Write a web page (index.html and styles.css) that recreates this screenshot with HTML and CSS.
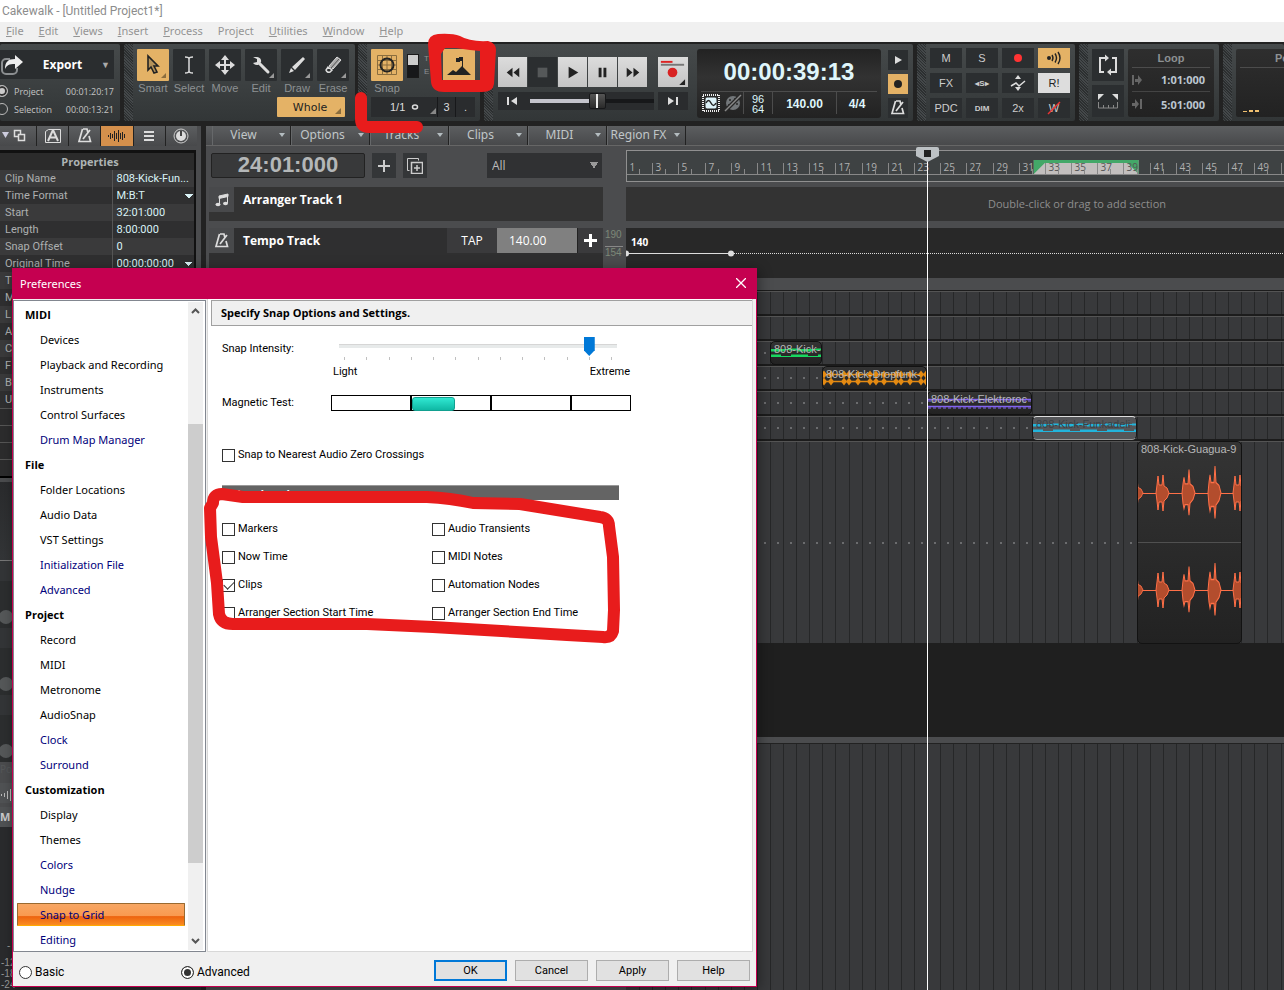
FILE: index.html
```html
<!DOCTYPE html>
<html lang="en">
<head>
<meta charset="utf-8">
<title>Cakewalk - [Untitled Project1*]</title>
<link rel="stylesheet" href="styles.css">
</head>
<body>
<div class="app">
  <header class="titlebar">Cakewalk - [Untitled Project1*]</header>
  <nav class="menubar">
    <a href="#"><u>F</u>ile</a><a href="#"><u>E</u>dit</a><a href="#"><u>V</u>iews</a><a href="#"><u>I</u>nsert</a><a href="#"><u>P</u>rocess</a><a href="#">Project</a><a href="#"><u>U</u>tilities</a><a href="#"><u>W</u>indow</a><a href="#"><u>H</u>elp</a>
  </nav>

  <section class="toolbar">
    <div class="module export">
      <button class="export-btn">
        <svg width="24" height="24" viewBox="0 0 24 24"><path d="M10 6H6a4 4 0 0 0-4 4v7a4 4 0 0 0 4 4h7a4 4 0 0 0 4-4v-2" fill="none" stroke="#8b8e90" stroke-width="2"/><path d="M5 16c0-7 3-10 10-10V2l8 7-8 7v-5c-6 0-8 1-10 5z" fill="#eee"/></svg>
        <span>Export</span><i>▼</i>
      </button>
      <label class="export-row"><input type="radio" name="range" checked><span>Project</span><b>00:01:20:17</b></label>
      <label class="export-row"><input type="radio" name="range"><span>Selection</span><b>00:00:13:21</b></label>
    </div>

    <div class="module gripped tools">
      <div class="tool-row">
        <div class="tool"><button class="sq on" aria-label="Smart"><svg viewBox="0 0 32 32"><path d="M11 7v14l3-3 3 6 3-1-3-6h4z" fill="#b5925a" stroke="#222" stroke-width="1.6"/><path d="M29 24v5h-5z" fill="#8a6d3e"/></svg></button><span>Smart</span></div>
        <div class="tool"><button class="sq" aria-label="Select"><svg viewBox="0 0 32 32"><path d="M12 8q4 0 4 2q0-2 4-2M16 9v14M12 24q4 0 4-2q0 2 4 2" fill="none" stroke="#ddd" stroke-width="1.5"/></svg></button><span>Select</span></div>
        <div class="tool"><button class="sq" aria-label="Move"><svg viewBox="0 0 32 32"><path d="M16 9v14M9 16h14" stroke="#ddd" stroke-width="2"/><path d="M16 6l4 5h-8zM16 26l4-5h-8zM6 16l5-4v8zM26 16l-5-4v8z" fill="#ddd"/></svg></button><span>Move</span></div>
        <div class="tool"><button class="sq" aria-label="Edit"><svg viewBox="0 0 32 32"><path d="M14 14l9 9" stroke="#ddd" stroke-width="3" stroke-linecap="round"/><path d="M8 8h4a4 4 0 0 1 4 5l-3 3a5 5 0 0 1-5-2l4-1v-3z" fill="#ddd"/><path d="M29 24v5h-5z" fill="#999"/></svg></button><span>Edit</span></div>
        <div class="tool"><button class="sq" aria-label="Draw"><svg viewBox="0 0 32 32"><path d="M22 8l2 2-10 11-3-3zM10 19l3 3-5 2z" fill="#ddd"/><path d="M29 24v5h-5z" fill="#999"/></svg></button><span>Draw</span></div>
        <div class="tool"><button class="sq" aria-label="Erase"><svg viewBox="0 0 32 32"><path d="M20 8l4 3-8 9-4-3z" fill="#aaa" stroke="#ddd"/><path d="M11 18l4 3-2 2q-3 1-4-2z" fill="none" stroke="#ddd" stroke-width="1.5"/><path d="M22 10l-8 9" stroke="#555"/><path d="M29 24v5h-5z" fill="#999"/></svg></button><span>Erase</span></div>
      </div>
      <button class="whole">Whole<svg width="6" height="6"><path d="M6 0v6H0z" fill="#8a6d3e"/></svg></button>
    </div>

    <div class="module gripped snap">
      <div class="snap-row">
        <div class="tool"><button class="sq on" aria-label="Snap"><svg viewBox="0 0 32 32"><path d="M6.500 6.500h19v19h-19zM11.500 6v20M16 6v20M20.500 6v20M6 11.500h20M6 16h20M6 20.500h20" fill="none" stroke="#8a6d3e"/><circle cx="16" cy="16" r="6.500" fill="none" stroke="#222" stroke-width="2"/></svg></button><span>Snap</span></div>
        <button class="toggle" aria-label="Snap mode"></button>
        <div class="te"><span>T</span><span>E</span></div>
        <button class="sq on landmark" aria-label="Landmarks"><svg viewBox="0 0 32 32"><path d="M4 26l6-5 3 2-2 3zM10 26l9-9 9 9z" fill="#222"/><path d="M13 9h4v4h-4zM16 8h4v4h-4z" fill="#222"/><path d="M19.500 8v11" stroke="#222"/></svg></button>
      </div>
      <div class="snap-values"><button class="v1">1/1 &nbsp;<svg width="8" height="8"><ellipse cx="4" cy="4" rx="2.500" ry="2" fill="none" stroke="#ddd" stroke-width="1.500"/></svg><svg class="corner" width="6" height="6"><path d="M6 0v6H0z" fill="#888"/></svg></button><button class="v2">3</button><button class="v3">.</button></div>
    </div>

    <div class="module gripped transport">
      <div class="deck">
        <div class="deck-row">
          <button class="key" aria-label="Rewind"><svg viewBox="0 0 30 30"><path d="M15 10v10l-6-5zM22 10v10l-6-5z"/></svg></button>
          <button class="key dark" aria-label="Stop"><svg viewBox="0 0 30 30"><path d="M10 10h10v10H10z" fill="#555859"/></svg></button>
          <button class="key" aria-label="Play"><svg viewBox="0 0 30 30"><path d="M11 9v12l10-6z"/></svg></button>
          <button class="key" aria-label="Pause"><svg viewBox="0 0 30 30"><path d="M11 10h3v10h-3zM16 10h3v10h-3z"/></svg></button>
          <button class="key" aria-label="Forward"><svg viewBox="0 0 30 30"><path d="M9 10v10l6-5zM16 10v10l6-5z"/></svg></button>
          <button class="key rec" aria-label="Record"><svg viewBox="0 0 30 30"><path d="M3 3h12v2H3z" fill="#d22"/><path d="M3 6h24v2H3z" fill="#777"/><circle cx="15" cy="15" r="5" fill="#d82222"/><path d="M28 22v6h-6z"/></svg></button>
        </div>
        <div class="deck-row seek">
          <button class="end" aria-label="Go to start"><svg width="12" height="10"><path d="M0 1h2v8H0zM10 1v8L4 5z" fill="#ddd"/></svg></button>
          <input class="scrub" type="range" min="0" max="100" value="56" aria-label="Position">
          <button class="end last" aria-label="Go to end"><svg width="12" height="10"><path d="M9 1h2v8H9zM1 1v8l6-4z" fill="#ddd"/></svg></button>
        </div>
      </div>
      <div class="clock">
        <div class="clock-time">00:00:39:13</div>
        <div class="clock-info">
          <svg width="42" height="18" viewBox="0 0 42 18"><rect x="2" y="1" width="16" height="16" fill="none" stroke="#eee" stroke-width="2" stroke-dasharray="1 1"/><rect x="4" y="3" width="12" height="12" rx="2" fill="#ddf2f8" stroke="#222"/><path d="M5 9q2.500-5 5 0t5 0" fill="none" stroke="#222" stroke-width="1.500"/><circle cx="32" cy="9" r="7" fill="#73777a"/><g fill="#292929"><circle cx="29" cy="6" r="1"/><circle cx="34" cy="5" r="1"/><circle cx="28" cy="11" r="1"/><circle cx="36" cy="10" r="1"/></g><path d="M24 17L40 1" stroke="#292929" stroke-width="4"/><path d="M24 17L40 1" stroke="#888" stroke-width="1.500"/></svg>
          <span class="rate">96<br>64</span><b class="tempo">140.00</b><b class="meter">4/4</b>
        </div>
      </div>
      <div class="side">
        <button aria-label="Play mode"><svg viewBox="0 0 20 20"><path d="M7 6v8l7-4z" fill="#ddd"/></svg></button>
        <button class="on" aria-label="Record mode"><svg viewBox="0 0 20 20"><circle cx="10" cy="10" r="4" fill="#222"/></svg></button>
        <button aria-label="Metronome"><svg viewBox="0 0 20 20"><use href="#metro"/></svg></button>
      </div>
    </div>

    <div class="module gripped mix">
      <button>M</button><button>S</button><button aria-label="Arm"><svg viewBox="0 0 32 20"><circle cx="16" cy="10" r="4" fill="#f33"/></svg></button><button class="on" aria-label="Input echo"><svg viewBox="0 0 32 20"><circle cx="11" cy="10" r="2" fill="#222"/><path d="M14 7q2 3 0 6M17 5.500q3 4.500 0 9M20 4q4 6 0 12" fill="none" stroke="#222" stroke-width="1.400"/></svg></button>
      <button>FX</button><button class="tiny">◂S▸</button><button aria-label="Offset"><svg viewBox="0 0 32 20"><path d="M9 13l5-3 3 3 6-5" fill="none" stroke="#ddd" stroke-width="1.500"/><path d="M16 2l3 4h-6zM16 18l3-4h-6z" fill="#ddd"/></svg></button><button class="lit">R!</button>
      <button>PDC</button><button class="tiny">DIM</button><button>2x</button><button class="write"><span>W</span><svg viewBox="0 0 32 20"><path d="M10 16L22 4" stroke="#e33" stroke-width="1.500"/></svg></button>
    </div>

    <div class="module gripped loop">
      <div class="loop-btns">
        <button aria-label="Loop"><svg viewBox="0 0 32 32"><path d="M12 9H8v14h4M20 23h4V9h-4M12 9h3M17 23h3" fill="none" stroke="#ddd" stroke-width="2"/><path d="M13 5.500v7l4-3.500zM19 19.500v7l-4-3.500z" fill="#ddd"/></svg></button>
        <button aria-label="Set loop"><svg viewBox="0 0 32 32"><path d="M6 9h6l-6 6zM26 9h-6l6 6z" fill="#ddd"/><path d="M6.500 17v6h19v-6M11.500 20v3M16.500 20v3M21.500 20v3" fill="none" stroke="#888"/></svg></button>
      </div>
      <div class="panel">
        <h3>Loop</h3>
        <p><svg width="11" height="12"><path d="M0 1h2v10H0zM3 5h3V1l4 5-4 5V8H3z" fill="#666"/></svg><b>1:01:000</b></p>
        <p><svg width="11" height="12"><path d="M8 1h2v10H8zM0 5h3V1l4 5-4 5V8H0z" fill="#666"/></svg><b>5:01:000</b></p>
      </div>
    </div>

    <div class="module gripped perf"><div class="panel"><h3>Pe</h3><svg width="18" height="3"><path d="M0 1h4v1H0zM6 0h4v2H6zM12 0h4v2h-4z" fill="#f0c070"/></svg></div></div>
  </section>

  <div class="work">
    <aside class="inspector">
      <div class="tabs">
        <button aria-label="Dock"><svg width="24" height="16"><path d="M0 4h7l-3.500 6z" fill="#ccd"/><path d="M12.500 2.500h6v6h-6z" fill="none" stroke="#ddd" stroke-width="1.500"/><path d="M16.500 6.500h6v6h-6z" fill="#555" stroke="#ddd" stroke-width="1.500"/></svg></button>
        <button aria-label="Arranger"><svg width="16" height="16"><path d="M3.500 1.500h12v13H.500v-11z" fill="none" stroke="#ddd"/><path d="M3 13l4.500-10h1L13 13M5 9.500h6" fill="none" stroke="#ddd" stroke-width="2"/></svg></button>
        <button aria-label="Tempo"><svg width="20" height="20"><use href="#metro"/></svg></button>
        <button class="on" aria-label="Clip"><svg width="18" height="14"><path d="M.500 6v2M2.500 4v6M4.500 5v4M6.500 2v10M8.500 4v6M10.500 1v12M12.500 4v6M14.500 3v8M16.500 5v4" stroke="#222"/></svg></button>
        <button aria-label="List"><svg width="12" height="12"><path d="M1 1h10v2H1zM1 5h10v2H1zM1 9h10v2H1z" fill="#ddd"/></svg></button>
        <button aria-label="Channel"><svg width="16" height="16"><circle cx="8" cy="8" r="7" fill="none" stroke="#ccc"/><circle cx="8" cy="8" r="5" fill="#ddd"/><path d="M8 3v5" stroke="#444" stroke-width="2"/></svg></button>
      </div>
      <table class="props">
        <caption>Properties</caption>
        <tbody>
          <tr><th>Clip Name</th><td>808-Kick-Fun...</td></tr>
          <tr><th><label for="tf">Time Format</label></th><td><select id="tf"><option>M:B:T</option></select></td></tr>
          <tr><th>Start</th><td>32:01:000</td></tr>
          <tr><th>Length</th><td>8:00:000</td></tr>
          <tr><th>Snap Offset</th><td>0</td></tr>
          <tr><th><label for="ot">Original Time</label></th><td><select id="ot"><option>00:00:00:00</option></select></td></tr>
          <tr><th>T</th><td></td></tr><tr><th>M</th><td></td></tr><tr><th>L</th><td></td></tr><tr><th>A</th><td></td></tr>
          <tr><th>C</th><td></td></tr><tr><th>F</th><td></td></tr><tr><th>B</th><td></td></tr><tr><th>U</th><td></td></tr>
        </tbody>
      </table>
      <div class="blanks"><i></i><i></i><i></i><i></i></div>
      <div class="rack"></div>
      <div class="knob"><i></i>Pos</div><div class="knob"><i></i>Pos</div><div class="knob"><i></i>Pos</div>
      <div class="strip-btn first"><svg width="12" height="12"><path d="M1.500 5v2M4.500 4v4M7.500 2v8M10.500 0v12" stroke="#bbb"/></svg></div>
      <div class="strip-btn bold">M</div>
      <div class="meter-scale"><span>-</span><span>-12</span><span>-18</span><span>-24</span></div>
    </aside>

    <main class="tracks">
      <nav class="track-menu">
        <button>View<i></i></button><button>Options<i></i></button><button>Tracks<i></i></button><button>Clips<i></i></button><button>MIDI<i></i></button><button>Region FX<i></i></button>
      </nav>
      <div class="track-body">
        <div class="heads">
          <div class="head-bar">
            <div class="now">24:01:000</div>
            <button aria-label="Add"><svg width="14" height="14"><path d="M7 1v12M1 7h12" stroke="#ccc" stroke-width="2"/></svg></button>
            <button aria-label="Duplicate"><svg width="16" height="16"><path d="M4.500 4.500h11v11h-11zM10 7v6M7 10h6" fill="none" stroke="#ccc" stroke-width="1.500"/><path d="M2.500 12.500h-2v-12h11v2" fill="none" stroke="#ccc"/></svg></button>
            <select aria-label="Track filter"><option>All</option></select>
          </div>
          <div class="head arr"><div class="ico"><svg width="14" height="14"><path d="M4 3l9-2v2.500L4 5.500zM4.500 4v7M12.500 2v8" stroke="#ddd" fill="#ddd"/><ellipse cx="3" cy="11.500" rx="2.500" ry="1.700" fill="#ddd"/><ellipse cx="10.500" cy="10.500" rx="2.500" ry="1.700" fill="#ddd"/></svg></div><strong>Arranger Track 1</strong></div>
          <div class="head tmp"><div class="ico"><svg width="20" height="20"><use href="#metro"/></svg></div><strong>Tempo Track</strong><button class="tap">TAP</button><input value="140.00" aria-label="Tempo"><button class="plus" aria-label="Add tempo"><svg width="13" height="13"><path d="M6.500 0v13M0 6.500h13" stroke="#fff" stroke-width="3"/></svg></button></div>
        </div>
        <div class="scale"><span>190</span><span class="sep">154</span><span>98</span></div>
        <div class="timeline">
          <svg class="ruler" id="ruler"></svg>
          <div class="arr-lane">Double-click or drag to add section</div>
          <div class="tempo-lane"><b>140</b><svg width="100%" height="7"><path d="M0 3.500h105" stroke="#ddd"/><path d="M106 3.500h900" stroke="#ddd" stroke-dasharray="1 1"/><circle cx="0" cy="3.500" r="3" fill="#ddd"/><circle cx="105" cy="3.500" r="3" fill="#ddd"/></svg></div>
          <div class="lanes" id="lanes"></div>
          <div class="void"></div>
          <div class="split"></div>
          <div class="lower" id="lower"></div>
          <div class="playhead"><svg width="23" height="15"><path d="M2 0h19q2 0 2 2v7l-11.500 6L0 9V2q0-2 2-2z" fill="#bcc1c4"/><path d="M8 3h7v7H8z" fill="#222"/></svg></div>
        </div>
      </div>
    </main>
  </div>

  <section class="dialog" role="dialog" aria-label="Preferences">
    <header><span>Preferences</span><button aria-label="Close"><svg width="10" height="10"><path d="M0 0l10 10M10 0L0 10" stroke="#fff" stroke-width="1.300"/></svg></button></header>
    <div class="dlg-body">
      <div class="tree">
        <nav>
          <h4>MIDI</h4><a href="#">Devices</a><a href="#">Playback and Recording</a><a href="#">Instruments</a><a href="#">Control Surfaces</a><a href="#" class="adv">Drum Map Manager</a>
          <h4>File</h4><a href="#">Folder Locations</a><a href="#">Audio Data</a><a href="#">VST Settings</a><a href="#" class="adv">Initialization File</a><a href="#" class="adv">Advanced</a>
          <h4>Project</h4><a href="#">Record</a><a href="#">MIDI</a><a href="#">Metronome</a><a href="#">AudioSnap</a><a href="#" class="adv">Clock</a><a href="#" class="adv">Surround</a>
          <h4>Customization</h4><a href="#">Display</a><a href="#">Themes</a><a href="#" class="adv">Colors</a><a href="#" class="adv">Nudge</a><a href="#" class="adv sel">Snap to Grid</a><a href="#" class="adv">Editing</a>
        </nav>
        <div class="scroll"><svg width="9" height="6"><path d="M1 5l3.500-3.500L8 5" fill="none" stroke="#555" stroke-width="2"/></svg><i></i><svg width="9" height="6"><path d="M1 1l3.500 3.500L8 1" fill="none" stroke="#555" stroke-width="2"/></svg></div>
      </div>
      <div class="page">
        <h2>Specify Snap Options and Settings.</h2>
        <div class="form">
          <div class="field"><label for="intensity">Snap Intensity:</label>
            <div class="slider"><input type="range" id="intensity" min="0" max="12" value="11"><div class="ticks"><i></i><i></i><i></i><i></i><i></i><i></i><i></i><i></i><i></i><i></i><i></i><i></i><i></i></div><div class="ends"><span>Light</span><span>Extreme</span></div></div></div>
          <div class="field mag"><span>Magnetic Test:</span><div class="segs"><i></i><i class="ball"></i><i></i><i></i></div></div>
          <label class="chk zero"><input type="checkbox">Snap to Nearest Audio Zero Crossings</label>
          <h3>Landmarks</h3>
          <div class="marks">
            <label class="chk"><input type="checkbox">Markers</label><label class="chk"><input type="checkbox">Audio Transients</label>
            <label class="chk"><input type="checkbox">Now Time</label><label class="chk"><input type="checkbox">MIDI Notes</label>
            <label class="chk"><input type="checkbox" checked>Clips</label><label class="chk"><input type="checkbox">Automation Nodes</label>
            <label class="chk"><input type="checkbox">Arranger Section Start Time</label><label class="chk"><input type="checkbox">Arranger Section End Time</label>
          </div>
        </div>
      </div>
    </div>
    <footer>
      <label><input type="radio" name="mode">Basic</label><label class="second"><input type="radio" name="mode" checked>Advanced</label>
      <div class="btns"><button class="default">OK</button><button>Cancel</button><button>Apply</button><button>Help</button></div>
    </footer>
  </section>

  <svg class="marker" width="640" height="660" viewBox="0 0 640 660">
    <path fill-rule="evenodd" fill="#e81c1c" d="M428 44Q428 35 438 34Q452 33 460 36Q470 42 488 41Q496 43 496 50L494 84Q493 92 482 92H444Q432 92 431 82ZM445 48L441 54L442 80H480V51L470 50L456 48Z"/>
    <g fill="none" stroke="#e81c1c" stroke-width="12" stroke-linecap="round" stroke-linejoin="round">
      <path d="M361 98V119Q361 127 369 127H417"/>
      <path d="M210 508L213 503Q213 494 222 494L243 497H427Q450 498 473 503L520 504L600 517Q609 518 609 526L613 557L614 610L613 631Q611 638 603 637L567 635L433 627L367 624H233Q221 624 219 614L217 583L211 537L210 508"/>
    </g>
  </svg>
</div>
<svg width="0" height="0" class="defs"><defs><g id="metro"><path d="M8 3h4l1 4M7.500 3L4 15.500h11.500L14 10M8 13l7-9" fill="none" stroke="#ddd" stroke-width="1.700"/></g></defs></svg>
<script src="app.js"></script>
</body>
</html>
```

FILE: styles.css
```css
* { box-sizing: border-box; }
body { margin: 0; font-family: "Open Sans", "Noto Sans", sans-serif; font-size: 11px; color: #ccc; background: #222; }
button, input, select { font: inherit; color: inherit; margin: 0; }
button { border: 0; padding: 0; background: none; }
button svg { display: block; }
a { text-decoration: none; }
h2, h3, h4, p { margin: 0; }
.defs { position: absolute; }
.app { position: relative; height: 100vh; overflow: hidden; display: flex; flex-direction: column; }
.titlebar { height: 22px; line-height: 22px; padding-left: 2px; background: #fff; color: #8c8c8c; font-size: 12px; font-family: Roboto, sans-serif; flex: none; }
.menubar { height: 20px; background: #f0f0f0; display: flex; gap: 15px; padding-left: 6px; line-height: 18px; font-size: 11px; font-family: "Noto Sans", sans-serif; flex: none; }
.menubar a { color: #949494; }

.toolbar { height: 84px; padding: 2px 0 5px; background: #222; display: flex; gap: 4px; flex: none; overflow: hidden; font-family: "Liberation Sans", sans-serif; }
.module { background: linear-gradient(#464a4b, #323637); border-radius: 2px; padding: 5px 5px 4px; flex: none; }
.gripped { padding-left: 13px; background: repeating-linear-gradient(45deg, #2c2f30 0 1px, #44484a 1px 2px) 0 0 / 9px 100% no-repeat, linear-gradient(#464a4b, #323637); }
.export { width: 120px; padding: 6px 6px 0 0; font-family: "Open Sans", sans-serif; }
.export-btn { width: 100%; height: 29px; background: #2a2d2f; display: flex; align-items: center; justify-content: space-between; color: #fff; font-weight: bold; font-size: 12px; padding-right: 4px; margin-bottom: 3px; }
.export-btn i { font-style: normal; font-size: 9px; color: #aaa; }
.export-row { display: flex; align-items: center; height: 18px; font-size: 9px; gap: 6px; color: #c4c4c4; }
.export-row span { flex: 1; }
.export-row b { font-weight: normal; }
.export-row input { appearance: none; width: 12px; height: 12px; border: 1px solid #bbb; border-radius: 50%; margin-left: -4px; }
.export-row input:checked { background: #ccc; box-shadow: inset 0 0 0 2px #333; }
.tool-row { display: flex; gap: 4px; }
.tool { width: 32px; display: flex; flex-direction: column; align-items: center; font-size: 11px; line-height: 15px; color: #8d9193; }
.sq { width: 32px; height: 32px; background: #2b2e30; border-radius: 1px; }
.on, .sq.on { background: #e4b266; }
.tools { width: 231px; }
.whole { display: flex; align-items: center; justify-content: center; gap: 8px; width: 68px; height: 20px; margin: 1px 0 0 140px; padding-left: 12px; background: #e4b266; color: #222; font: 11px "DejaVu Sans", sans-serif; border-radius: 1px; }
.whole svg { margin-top: 8px; }
.snap { width: 122px; margin-left: -1px; }
.snap-row { display: flex; }
.toggle { width: 12px; height: 24px; margin: 5px 5px 0 4px; background: linear-gradient(#ccc 45%, #17181a 45%); border: 1px solid #1a1a1a; }
.te { display: flex; flex-direction: column; width: 8px; font-size: 8px; line-height: 13px; padding-top: 3px; color: #8d9193; }
.landmark { margin-left: 11px; }
.snap-values { display: flex; height: 20px; margin-top: 1px; background: #2a2c2e; color: #ddd; width: 104px; }
.snap-values button { border-right: 1px solid #17181a; }
.v1 { width: 67px; padding: 0 1px 0 19px; display: flex; align-items: center; }
.v1 .corner { margin: 8px 0 0 auto; }
.v2 { width: 18px; } .v3 { flex: 1; }
.snap-values .v3 { border: 0; }
.transport { width: 429px; display: flex; padding-left: 14px; }
.deck { width: 190px; padding-top: 8px; margin-right: 9px; }
.deck-row { display: flex; gap: 1px; }
.key { width: 29px; height: 30px; background: linear-gradient(#dcdcdc, #c4c4c4); }
.key svg { fill: #222; width: 29px; }
.key.dark { background: #2b2e30; }
.key.rec { margin-left: 10px; width: 30px; }
.seek { margin-top: 5px; height: 18px; align-items: stretch; gap: 0; }
.end { width: 30px; background: #2a2c2e; display: flex; align-items: center; justify-content: center; }
.scrub { appearance: none; width: 124px; flex: 1; background: linear-gradient(#c4c4cc, #c4c4cc) 2px 7px / 70px 4px no-repeat, linear-gradient(#17181a, #17181a) 2px 7px / 124px 4px no-repeat, #2a2c2e; }
.scrub::-webkit-slider-thumb { appearance: none; width: 17px; height: 16px; border: 1px solid #17181a; border-radius: 2px; background: linear-gradient(90deg, transparent 6px, #eee 6px 8px, transparent 8px), linear-gradient(#555, #2a2a2a); }
.end.last { margin-left: 4px; }
.clock { width: 185px; border-radius: 3px; background: linear-gradient(#222, #323232 40%, #222); padding: 0 4px; height: 69px; }
.clock-time { font-size: 24px; font-weight: bold; color: #dff6fb; text-align: center; line-height: 42px; padding-top: 2px; height: 43px; border-bottom: 1px solid #4c4c4c; }
.clock-info { display: flex; color: #dff6fb; font-size: 12px; height: 22px; align-items: center; }
.clock-info > span, .clock-info > b { height: 22px; line-height: 24px; border-left: 1px solid #4c4c4c; text-align: center; }
.clock-info .rate { width: 29px; line-height: 10px; padding-top: 2px; font-size: 11px; }
.tempo { width: 64px; } .meter { flex: 1; }
.side { display: flex; flex-direction: column; gap: 4px; margin: 1px 0 0 7px; }
.side button { width: 20px; height: 20px; background: #2b2e30; }
.side .on { background: #e4b266; }
.mix { width: 158px; display: grid; grid-template-columns: repeat(4, 32px); grid-auto-rows: 20px; gap: 5px 4px; padding-top: 4px; }
.mix button { background: #2b2e30; color: #ccc; }
.mix .on { background: #e4b266; }
.mix .tiny { font-size: 8px; font-weight: bold; }
.mix .lit { background: #ddd; color: #222; }
.mix .write { display: grid; place-items: center; }
.write span, .write svg { grid-area: 1 / 1; }
.write svg { width: 32px; }
.loop { width: 140px; display: flex; gap: 4px; }
.loop-btns { display: flex; flex-direction: column; gap: 4px; }
.loop-btns button { width: 32px; height: 32px; background: #2b2e30; }
.panel { flex: 1; height: 68px; background: linear-gradient(#2e2e2e, #222); border-radius: 2px; padding: 0 4px; font-family: "Open Sans", sans-serif; }
.panel h3 { font: bold 11px/18px "Liberation Sans", sans-serif; color: #8d9193; text-align: center; border-bottom: 1px solid #4c4c4c; }
.panel p { display: flex; justify-content: space-between; align-items: center; height: 24px; padding-right: 5px; font-size: 11px; color: #bcc6d0; border-bottom: 1px solid #444; }
.panel p + p { border: 0; }
.perf { flex: 1; min-width: 0; overflow: hidden; }
.perf .panel { width: 92px; }
.perf h3 { text-align: left; padding-left: 35px; }
.perf svg { display: block; margin: 42px 0 0 3px; }

.work { flex: 1; display: flex; gap: 5px; min-height: 0; }
.inspector { width: 201px; background: #4b4c4e; flex: none; overflow: hidden; display: flex; flex-direction: column; }
.tabs { display: flex; height: 20px; gap: 1px; margin-bottom: 4px; background: #222; width: 197px; flex: none; }
.tabs button { flex: 1; background: linear-gradient(#5c5e60, #48494b); display: flex; align-items: center; justify-content: center; }
.tabs button:first-child { flex: none; width: 36px; justify-content: flex-start; padding-left: 2px; }
.tabs .on { background: #d5904c; }
.props { border-collapse: collapse; width: 196px; flex: none; table-layout: fixed; border-right: 2px solid #111; background: #2c2c2d; font-family: Roboto, sans-serif; }
.props caption { background: #2b2b2b; border-top: 3px solid #111; border-right: 2px solid #111; height: 20px; padding-right: 14px; color: #aeb4b4; font: bold 11px/17px "Open Sans", sans-serif; }
.props tr { height: 17px; }
.props tr:nth-child(even) { background: #2f2f30; }
.props tr:nth-child(odd) { background: #3a3a3b; }
.props th, .props td { padding: 1px 0 0; height: 17px; line-height: 16px; overflow: hidden; white-space: nowrap; text-align: left; font-weight: normal; }
.props th { width: 112px; padding-left: 5px; color: #adb0b0; border-right: 1px solid #555; }
.props td { padding-left: 4px; color: #d9f2f6; }
.props select { appearance: none; display: block; border: 0; padding: 0; width: 100%; height: 16px; color: #d9f2f6; background: linear-gradient(to top right, transparent 50%, #d9f2f6 50%) right 5px top 6px / 4px 4px no-repeat, linear-gradient(to top left, transparent 50%, #d9f2f6 50%) right 1px top 6px / 4px 4px no-repeat; }
.blanks { background: #2c2c2d; height: 70px; border-bottom: 2px solid #000; flex: none; }
.blanks i { display: block; height: 17px; border-top: 1px solid #555; }
.rack { height: 79px; margin-top: 4px; background: linear-gradient(#2a2b2d, #333537); border-bottom: 1px solid #777; flex: none; }
.knob { height: 67px; flex: none; background: linear-gradient(#333537 30%, #2c2e2f 30%); font-size: 10px; line-height: 14px; color: #55585a; padding-top: 49px; }
.knob i { display: block; width: 14px; height: 14px; border-radius: 50%; background: #555859; margin: 0 0 4px -1px; }
.strip-btn { background: #505254; height: 20px; flex: none; margin-top: 4px; color: #ccc; line-height: 20px; }
.strip-btn.first { margin-top: 21px; padding-top: 4px; }
.strip-btn.bold { font-weight: bold; }
.meter-scale { flex: 1; background: #2a2b2d; padding: 108px 0 0 1px; display: flex; flex-direction: column; font: 10px/11px "Liberation Sans", sans-serif; color: #999; }
.meter-scale span:first-child { line-height: 22px; padding-left: 6px; }

.tracks { flex: 1; min-width: 0; background: #4b4c4e; display: flex; flex-direction: column; }
.track-menu { display: flex; height: 20px; flex: none; padding-left: 6px; background: linear-gradient(#5c5e60, #48494b); border-bottom: 1px solid #666; }
.track-menu button { width: 79px; height: 19px; padding-bottom: 2px; border-right: 1px solid #222; border-left: 1px solid #66686a; color: #c0c6c8; font: 12px/16px "Noto Sans", sans-serif; display: grid; grid-template-columns: 1fr 16px; align-items: center; }
.track-menu button i { border: 3px solid transparent; border-top: 4px solid #b4bcc0; border-bottom: 0; justify-self: center; }
.track-body { flex: 1; display: flex; min-height: 0; }
.heads { width: 397px; padding: 7px 0 0 3px; flex: none; display: flex; flex-direction: column; }
.head-bar { display: flex; height: 25px; margin: 0 1px 9px 2px; gap: 7px; }
.now { width: 154px; border: 1px solid #222; border-radius: 2px; background: #38393a; font: bold 22px/22px "Liberation Sans", sans-serif; color: #b4b7b8; text-align: center; }
.head-bar button { width: 24px; background: #343638; display: flex; align-items: center; justify-content: center; }
.head-bar select { appearance: none; border: 0; width: 115px; margin-left: auto; padding-left: 5px; font-size: 12px; color: #bbb; background: linear-gradient(to top right, transparent 50%, #999 50%) right 8px top 9px / 4px 7px no-repeat, linear-gradient(to top left, transparent 50%, #999 50%) right 4px top 9px / 4px 7px no-repeat, #303133; }
.head { display: flex; background: #333; height: 34px; margin-bottom: 7px; color: #fff; font-size: 12px; line-height: 25px; }
.head strong { padding-left: 9px; flex: 1; }
.tmp { height: auto; flex: 1; background: #2f2f30; align-items: flex-start; }
.ico { width: 25px; height: 25px; background: #48494b; display: flex; align-items: center; justify-content: center; }
.tap { width: 50px; height: 25px; background: #3a3a3c; }
.tmp input { width: 80px; height: 25px; border: 0; padding: 0 0 0 12px; background: #808080; }
.plus { width: 26px; height: 25px; background: #3a3a3c; display: flex; align-items: center; justify-content: center; border-left: 1px solid #222; }
.scale { width: 23px; flex: none; padding: 80px 3px 0 2px; display: flex; flex-direction: column; align-items: flex-start; gap: 2px; font: 10px/18px "Liberation Sans", sans-serif; color: #7d8878; }
.scale span { width: 18px; }
.sep { border-top: 1px solid #888; line-height: 12px; height: 16px; }
.timeline { flex: 1; position: relative; min-width: 0; overflow: hidden; display: flex; flex-direction: column; padding-top: 4px; }
.ruler { width: 100%; height: 32px; flex: none; border: 1px solid #909090; border-right: 0; background: #3e4243; font: 10px "Open Sans", sans-serif; }
.arr-lane { height: 34px; margin-top: 5px; flex: none; background: #333; line-height: 34px; padding-left: 362px; color: #8e8e8e; }
.tempo-lane { height: 50px; margin-top: 7px; flex: none; background: #282828; color: #fff; padding-top: 7px; }
.tempo-lane b { display: block; line-height: 15px; padding-left: 5px; font-size: 10px; }
.tempo-lane svg { display: block; }
.lanes { margin-top: 12px; flex: none; border-top: 1px solid #1c1c1c; }
.lane { position: relative; height: 25px; border-top: 1px solid #545454; border-bottom: 2px solid #1c1c1c; background: #38393b; }
.lane:last-child { height: 202px; border-bottom: 0; }
.lane > svg, .lower > svg { display: block; width: 100%; height: 100%; }
.clip { position: absolute; top: -1px; bottom: -1px; border: 1px solid #121212; border-radius: 5px; overflow: hidden; background: linear-gradient(#343434, #222); font: 11px/14px "Liberation Sans", sans-serif; color: #b8b8b8; white-space: nowrap; }
.clip svg { position: absolute; left: 0; top: 0; }
.clip span { position: relative; padding-left: 3px; }
.clip.selected { background: #555659; color: #3b4145; border-color: #ddd #17181a #999; }
.void { height: 94px; background: #1f1f1f; flex: none; }
.split { height: 6px; background: #4b4c4e; flex: none; }
.lower { flex: 1; background: #38393b; min-height: 0; border-top: 1px solid #222; }
.playhead { position: absolute; left: 290px; top: 1px; bottom: 0; width: 23px; background: linear-gradient(#fff, #fff) 11px 0 / 1px 100% no-repeat; }

.dialog { position: absolute; left: 12px; top: 268px; width: 745px; border: 1px solid #c50050; background: #f0f0f0; color: #000; box-shadow: 2px 2px 12px #0006; }
.dialog > header { background: #c50050; height: 30px; padding: 0 10px 2px 7px; display: flex; align-items: center; justify-content: space-between; color: #fff; font-family: "Noto Sans", sans-serif; }
.dlg-body { display: flex; height: 653px; }
.tree { width: 193px; margin-top: 1px; border: 1px solid #828790; background: #fff; display: flex; padding: 1px 2px 1px 3px; overflow: hidden; }
.tree nav { flex: 1; padding-right: 3px; font-family: "Noto Sans", sans-serif; }
.tree h4, .tree a { display: block; height: 23px; line-height: 23px; margin: 1px 0; font-size: 11px; color: #000; }
.tree nav > * + * { margin-top: 2px; margin-bottom: 0; }
.tree h4 { font-family: "Open Sans", sans-serif; padding-left: 8px; }
.tree a { padding-left: 23px; }
.tree .adv { color: #00007b; }
.tree .sel { background: linear-gradient(#f7a764, #f99a50 55%, #ed6410 60%, #fa8c22); border: 1px solid #9a6a30; border-bottom-color: #fa0; padding-left: 22px; line-height: 21px; border-radius: 1px; }
.scroll { width: 15px; background: #f0f0f0; display: flex; flex-direction: column; align-items: center; padding: 6px 0; }
.scroll i { width: 15px; height: 439px; background: #cdcdcd; margin: 110px 0 auto; }
.page { flex: 1; margin: 0 3px 0 1px; border: 1px solid #d8d8d8; border-top: 0; background: #fff; padding: 1px 0 0 3px; }
.page h2 { height: 26px; border: 1px solid #a0a0a0; border-right: 0; background: #f0f0f0; font-size: 11px; line-height: 24px; padding-left: 9px; }
.form { padding: 11px 0 0 11px; font-family: Roboto, sans-serif; }
.field { display: flex; }
.field > label, .field > span { width: 109px; line-height: 24px; }
.slider { width: 300px; }
.slider input { appearance: none; display: block; width: 278px; height: 19px; margin-left: 8px; background: linear-gradient(#d6d6d6, #d6d6d6) 0 7px / 100% 1px no-repeat, linear-gradient(#e7eaea, #e7eaea) 0 7px / 100% 4px no-repeat; }
.slider input::-webkit-slider-thumb { appearance: none; width: 11px; height: 19px; background: #0078d7; clip-path: polygon(0 0, 100% 0, 100% 70%, 50% 100%, 0 70%); }
.ticks { display: flex; justify-content: space-between; margin: 1px 19px 0 13px; }
.ticks i { width: 1px; height: 3px; background: #c0c0c0; }
.ends { display: flex; justify-content: space-between; line-height: 20px; padding: 2px 1px 0 2px; }
.mag { margin-top: 9px; }
.segs { display: flex; width: 300px; height: 16px; margin-top: 4px; border: 1px solid #000; }
.segs i { width: 80px; border-right: 2px solid #000; }
.segs i:last-child { border: 0; width: 58px; }
.ball::before { content: ""; display: block; width: 41px; height: 12px; margin-top: 1px; border-radius: 3px; border: 1px solid #12a090; background: linear-gradient(#30e8d2, #0fb8a4); }
.chk { display: flex; align-items: center; gap: 3px; line-height: 14px; height: 14px; }
.chk input { appearance: none; width: 13px; height: 13px; border: 1px solid #333; background: #fff; display: grid; place-items: center; }
.chk input:checked::before { content: ""; width: 9px; height: 5px; border: solid #333; border-width: 0 0 1px 1px; rotate: -45deg; margin-bottom: 3px; }
.zero { margin-top: 33px; }
.form h3 { width: 397px; height: 15px; margin-top: 23px; background: #646464; color: #fff; font: bold 11px/15px "Open Sans", sans-serif; padding-left: 15px; border-top: 1px solid #999; }
.marks { display: grid; grid-template-columns: 210px 210px; row-gap: 14px; margin-top: 22px; }
.dialog > footer { display: flex; align-items: center; height: 34px; padding: 2px 6px 0; font-size: 12px; font-family: Roboto, sans-serif; }
.dialog > footer label { display: flex; align-items: center; gap: 3px; width: 162px; padding-top: 4px; }
.dialog > footer input { appearance: none; width: 13px; height: 13px; border: 1px solid #333; border-radius: 50%; background: #fff; }
.dialog > footer input:checked { background: #333; box-shadow: inset 0 0 0 2px #fff; }
.btns { display: flex; gap: 8px; margin-left: auto; }
.btns button { width: 73px; height: 21px; background: #e1e1e1; border: 1px solid #adadad; font-size: 11px; padding-top: 1px; }
.btns .default { border: 2px solid #0078d7; }
.marker { position: absolute; left: 0; top: 0; pointer-events: none; }
```

FILE: app.js
```js
const BAR = 13.09;
const barX = (n) => (n - 1) * BAR;

function gridLines(h) {
  let d = '';
  for (let n = 2; n <= 140; n++) d += `M${Math.round(barX(n)) + 0.5} 0v${h}`;
  return `<path d="${d}" stroke="#262728"/>`;
}

function dots(until, y) {
  let s = '';
  for (let n = 1; n < until; n++) s += `<circle cx="${Math.round(barX(n) + 8)}" cy="${y}" r="1" fill="#7c7e80"/>`;
  return s;
}

// Ruler: a tick per bar, a number on every second bar, loop range on bars 32 to 40.
let ruler = '';
const a = barX(32) + 1, b = barX(40) + 1;
ruler += `<path d="M${a} 9H${b}V23H${a}z" fill="#c2bfbe"/><path d="M${a} 9H${b}V23L${b - 11} 12H${a + 11}L${a} 23z" fill="#43a868"/>`;
for (let n = 1; n <= 140; n++) {
  const x = Math.round(barX(n)) - 0.5;
  if (n % 2) {
    ruler += n > 1 ? `<path d="M${x} 12v11" stroke="#888"/>` : '';
    const dark = n > 32 && n < 40;
    ruler += `<text x="${x + 3}" y="20" fill="${dark ? '#555' : '#b0b0b0'}">${n}</text>`;
  } else {
    ruler += `<path d="M${x} 18v5" stroke="#888"/>`;
  }
}
ruler += '<path d="M0 23.500h2000" stroke="#888"/>';
document.getElementById('ruler').innerHTML = ruler;

function smallWave(kind, color, w) {
  let s = '';
  if (kind === 'blocks') {
    s += `<path d="M0 7.500H${w}M0 14.500H${w}" stroke="${color}"/>`;
    for (let x = 0; x < w; x += 27) s += `<path d="M${x} 8.500h14M${x} 13.500h10M${x + 18} 7.500h9M${x + 20} 13.500h7" stroke="${color}" stroke-width="2"/>`;
  } else if (kind === 'beats') {
    s += `<path d="M0 7.500H${w}M0 14.500H${w}" stroke="${color}" stroke-width="1.500"/>`;
    for (const x of [1, 8, 21, 26, 35, 47, 53, 61, 73, 78, 87, 98, 103]) s += `<path d="M${x - 3} 7.500l3-4 3 4-3 4zM${x - 3} 14.500l3-4 3 4-3 4z" fill="${color}"/>`;
  } else {
    s += `<path d="M0 7.500H${w}M0 14.500H${w}" stroke="${color}" stroke-width="1.500"/><path d="M0 9H${w}M0 16H${w}" stroke="${color}" stroke-dasharray="3 2"/>`;
  }
  return s;
}

function bigWave() {
  const burst = 'M-6 0L-5-8L-4-17L-3-8H0L1-18L2-7L5-5L7 0L5 5L2 8L1 18L0 9H-3L-4 17L-5 8z';
  const tall = 'M-6 0L-5-7L-4-12L-3-7H0L1-18L2-7L5-5L7 0L5 5L2 8L1 17L0 9H-3L-4 12L-5 8z';
  let s = '<path d="M0 100.500h110" stroke="#505050"/>';
  for (const y of [51, 148]) {
    s += `<path d="M0 ${y + 0.5}h110" stroke="#ff7048"/>`;
    [[-2, 0.8, burst], [24, 1, burst], [50, 1.3, tall], [76, 1.5, tall], [101, 1, burst]].forEach(([x, k, shape]) => {
      s += `<path transform="translate(${x} ${y}) scale(1 ${k})" d="${shape}" fill="#b34d2d" stroke="#ff7048"/>`;
    });
  }
  return s;
}

const lanes = [
  null, null,
  { from: 12, to: 16, name: '808-Kick-', kind: 'blocks', color: '#18d860' },
  { from: 16, to: 24, name: '808-Kick-Dropfunk-', kind: 'beats', color: '#e48a12' },
  { from: 24, to: 32, name: '808-Kick-Elektroroc', kind: 'line', color: '#8264f0' },
  { from: 32, to: 40, name: '808-Kick-Funkadeli', kind: 'blocks', color: '#22b4dc', selected: true },
  { from: 40, to: 48, name: '808-Kick-Guagua-9', kind: 'big' },
];

document.getElementById('lanes').innerHTML = lanes.map((c) => {
  if (!c) return `<div class="lane"><svg>${gridLines(25)}</svg></div>`;
  const big = c.kind === 'big';
  const w = Math.round(barX(c.to) - barX(c.from));
  const art = big ? bigWave() : smallWave(c.kind, c.color, w);
  return `<div class="lane"><svg>${gridLines(big ? 202 : 25)}${dots(c.from, big ? 101 : 11)}</svg>` +
    `<div class="clip${c.selected ? ' selected' : ''}" style="left:${Math.round(barX(c.from))}px;width:${w}px">` +
    `<svg width="${w}" height="200">${art}</svg><span>${c.name}</span></div></div>`;
}).join('');
document.getElementById('lower').innerHTML = `<svg>${gridLines(2000)}</svg>`;
```
